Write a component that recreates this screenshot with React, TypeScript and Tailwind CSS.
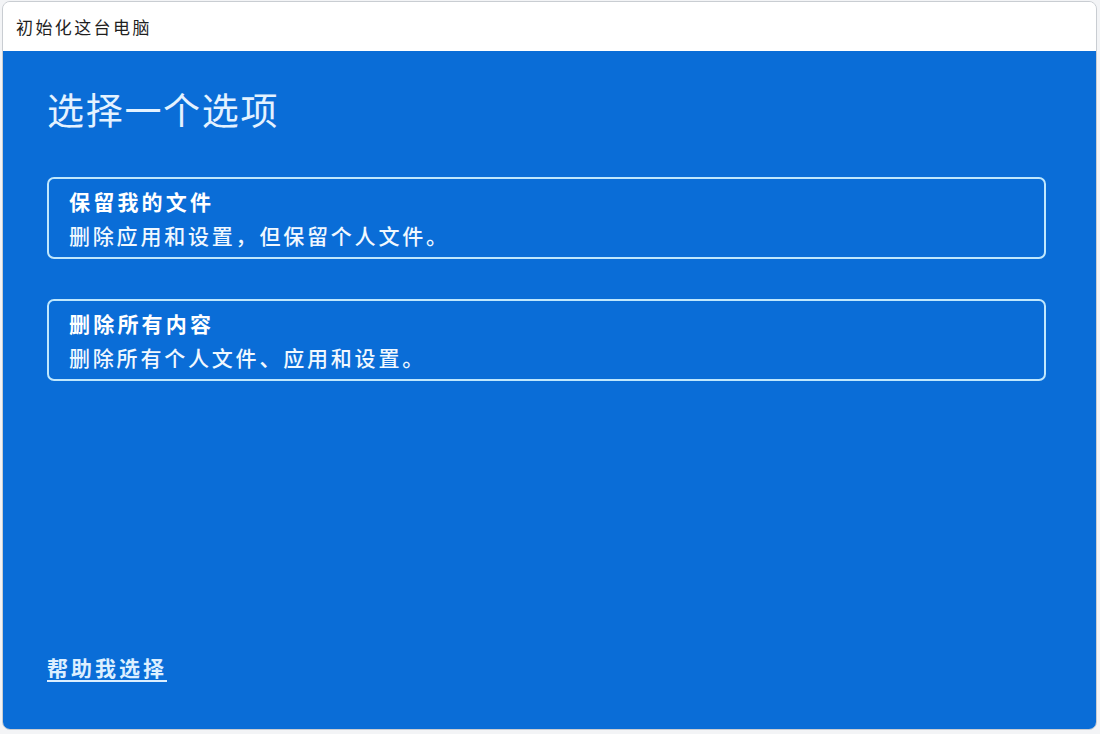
const CJK = "font-['Noto_Sans_CJK_SC','Noto_Sans',sans-serif]"

type Option = { title: string; desc: string }

const OPTIONS: Option[] = [
  { title: "保留我的文件", desc: "删除应用和设置，但保留个人文件。" },
  { title: "删除所有内容", desc: "删除所有个人文件、应用和设置。" },
]

function OptionCard({ title, desc }: Option) {
  return (
    <button className="flex h-[82px] w-[999px] flex-col justify-center rounded-[7px] border-[2.5px] border-[#bfe7fd] pl-[20px] text-left text-white">
      <span className="text-[21px] font-bold leading-[28px] tracking-[3.2px]">{title}</span>
      <span className="mt-[6px] text-[21px] font-medium leading-[28px] tracking-[2.8px] text-[#f0f8ff]">{desc}</span>
    </button>
  )
}

export default function App() {
  return (
    <div className={`h-[734px] w-[1100px] bg-[#f3f4f6] pb-[4px] pl-[2px] pr-[3px] pt-[1px] ${CJK}`}>
      <div className="flex h-full flex-col overflow-hidden rounded-[8px] border border-[#c9cdd2]">
        <div className="flex h-[49px] shrink-0 items-center bg-white pl-[13px] text-[17px] tracking-[2.4px] text-[#1f1f1f]">
          初始化这台电脑
        </div>
        <div className="flex flex-1 flex-col bg-[#0a6dd7] pl-[44px] pt-[36px]">
          <h1 className="text-[37px] leading-[44px] tracking-[1.7px] text-[#e4f2ff]">选择一个选项</h1>
          <div className="mt-[46px] flex flex-col gap-[40px]">
            {OPTIONS.map((o) => (
              <OptionCard key={o.title} {...o} />
            ))}
          </div>
          <div className="mt-auto pb-[48px]">
            <a
              href="#"
              className="text-[21px] font-bold leading-[28px] tracking-[3px] text-[#dcefff] underline underline-offset-[4px]"
            >
              帮助我选择
            </a>
          </div>
        </div>
      </div>
    </div>
  )
}
